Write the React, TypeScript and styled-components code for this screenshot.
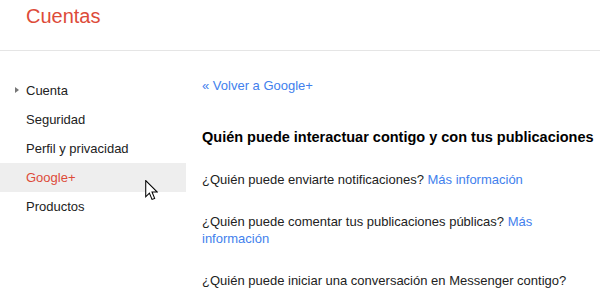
import styled, { createGlobalStyle } from "styled-components";

const GlobalStyle = createGlobalStyle`
  html, body {
    margin: 0;
    padding: 0;
    background: #fff;
    font-family: "Liberation Sans", Arial, sans-serif;
    font-size: 13px;
    color: #222;
  }
`;

const navItems = [
  { label: "Cuenta", arrow: true },
  { label: "Seguridad" },
  { label: "Perfil y privacidad" },
  { label: "Google+", active: true },
  { label: "Productos" },
];

const App = () => {
  return (
    <>
      <GlobalStyle />
      <Page>
        <Header>
          <Brand>Cuentas</Brand>
        </Header>
        <Body>
          <Sidebar>
            {navItems.map((item) => (
              <NavItem key={item.label} active={item.active}>
                {item.arrow && <Arrow />}
                {item.label}
              </NavItem>
            ))}
          </Sidebar>
          <Content>
            <BackLink>« Volver a Google+</BackLink>
            <Heading>Quién puede interactuar contigo y con tus publicaciones</Heading>
            <Question>
              ¿Quién puede enviarte notificaciones? <Link>Más información</Link>
            </Question>
            <Question>
              ¿Quién puede comentar tus publicaciones públicas? <Link>Más información</Link>
            </Question>
            <Question>¿Quién puede iniciar una conversación en Messenger contigo?</Question>
          </Content>
        </Body>
        <Cursor viewBox="0 0 12 20" width="13" height="21">
          <path
            d="M0.5 0.5 L0.5 16 L4 12.5 L6.5 18.5 L9 17.5 L6.5 11.5 L11.5 11.5 Z"
            fill="#fff"
            stroke="#000"
            strokeWidth="1"
            strokeLinejoin="miter"
          />
        </Cursor>
      </Page>
    </>
  );
};

export default App;

const Page = styled.div`
  position: relative;
  width: 600px;
  height: 295px;
  overflow: hidden;
`;

const Header = styled.div`
  height: 51px;
  border-bottom: 1px solid #e5e5e5;
  padding-left: 26px;
  box-sizing: border-box;
`;

const Brand = styled.div`
  padding-top: 4px;
  font-size: 20px;
  line-height: 24px;
  color: #dd4b39;
`;

const Body = styled.div`
  display: flex;
  padding-top: 23px;
`;

const Sidebar = styled.div`
  width: 186px;
  flex-shrink: 0;
  padding-top: 2px;
`;

const NavItem = styled.div<{ active?: boolean }>`
  position: relative;
  height: 29px;
  line-height: 29px;
  padding-left: 26px;
  color: ${(p) => (p.active ? "#dd4b39" : "#222")};
  background: ${(p) => (p.active ? "#eeeeee" : "transparent")};
`;

const Arrow = styled.span`
  position: absolute;
  left: 15px;
  top: 11px;
  width: 0;
  height: 0;
  border-top: 3.5px solid transparent;
  border-bottom: 3.5px solid transparent;
  border-left: 4px solid #777;
`;

const Content = styled.div`
  width: 400px;
  padding-left: 16px;
  flex-shrink: 0;
`;

const BackLink = styled.div`
  color: #427fed;
  line-height: 16px;
  padding-top: 4px;
`;

const Heading = styled.div`
  margin-top: 34px;
  font-size: 14.5px;
  font-weight: bold;
  color: #000;
  line-height: 18px;
  white-space: nowrap;
`;

const Question = styled.div`
  margin-top: 25px;
  line-height: 17px;
  color: #222;
`;

const Link = styled.span`
  color: #427fed;
`;

const Cursor = styled.svg`
  position: absolute;
  left: 145px;
  top: 180px;
`;
